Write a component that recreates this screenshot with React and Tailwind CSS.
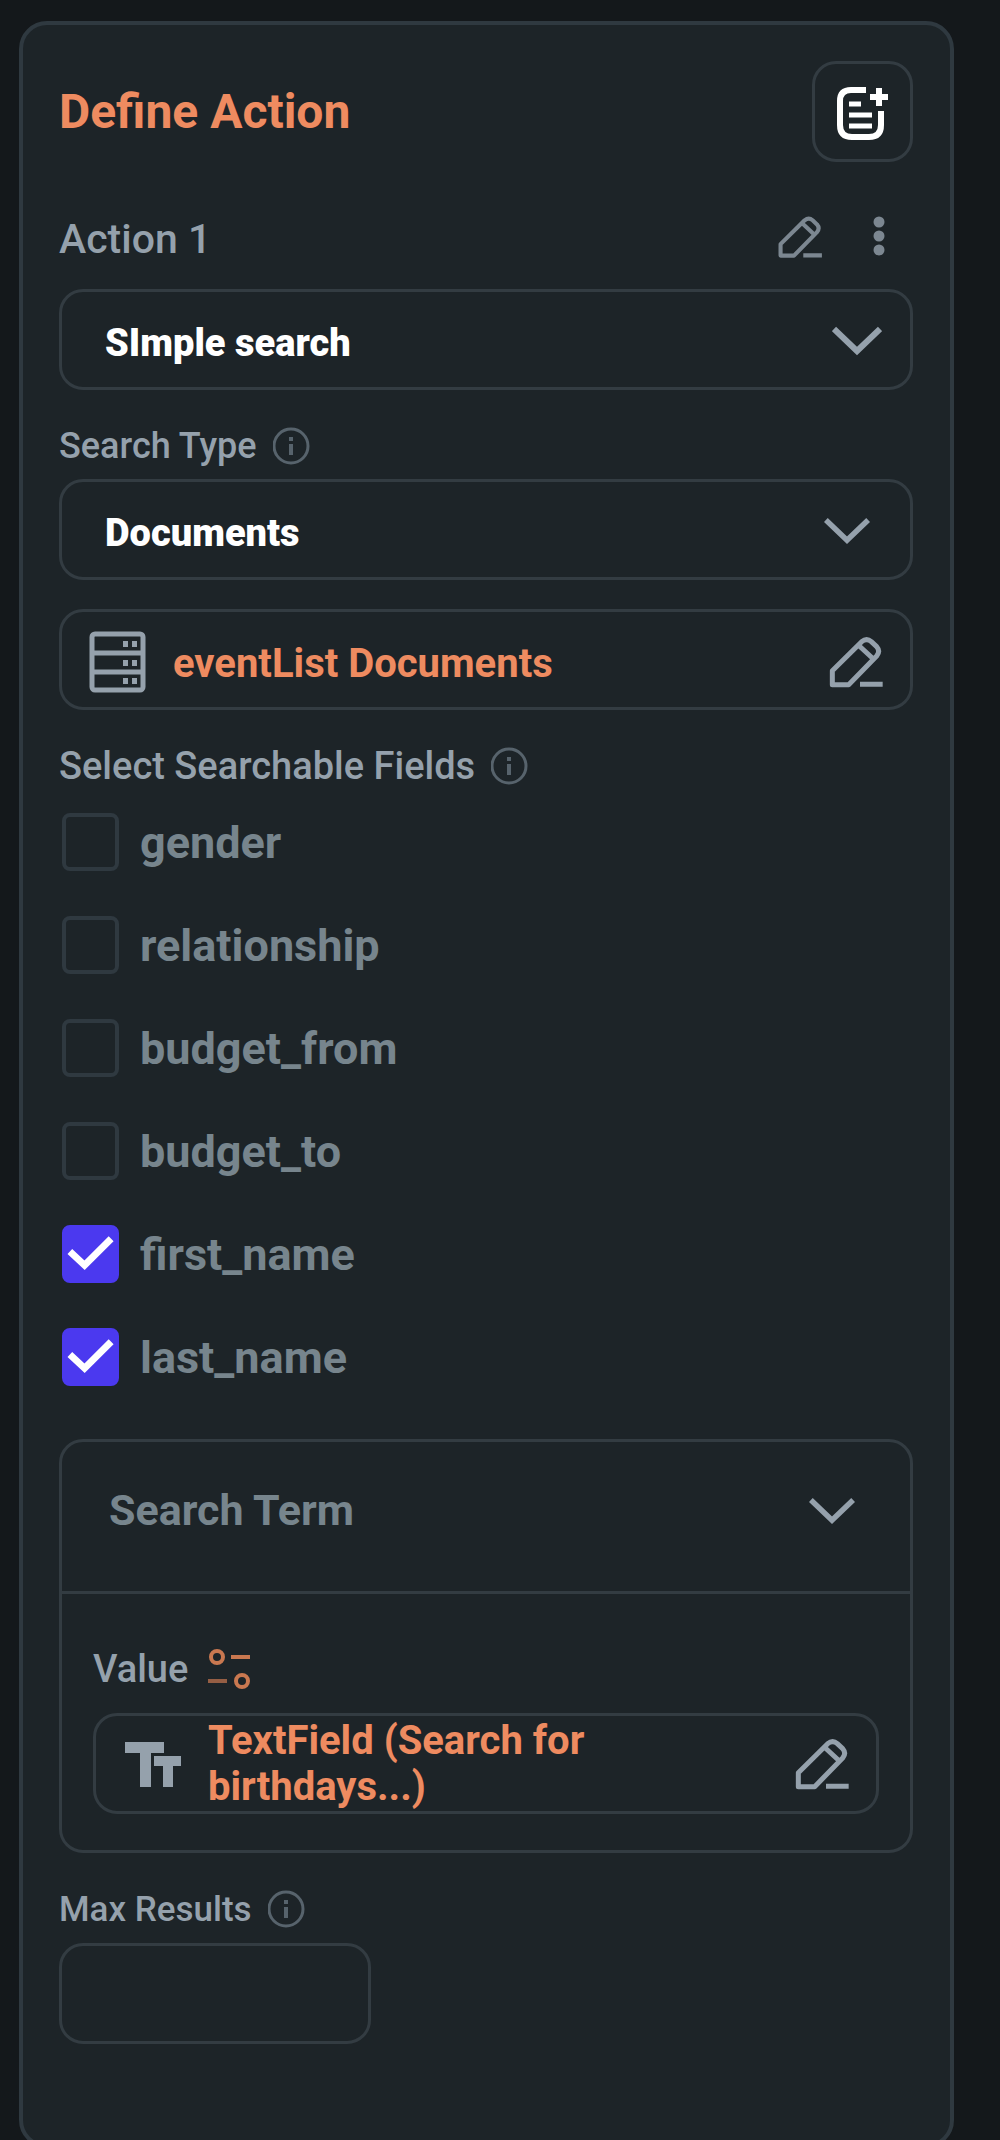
import { useState } from 'react'

const FIELDS = ['gender', 'relationship', 'budget_from', 'budget_to', 'first_name', 'last_name']

function PencilIcon({ className }) {
  return (
    <svg viewBox="0 0 168 160" fill="none" stroke="currentColor" strokeWidth="15" strokeLinejoin="round" className={className} aria-hidden="true">
      <path d="M13 148V106L101 19q15-12 29 0l16 15q12 14 0 28L62 148Z" />
      <path d="M94 32l39 36M96 147h68" />
    </svg>
  )
}

function ChevronIcon({ className }) {
  return (
    <svg viewBox="0 0 50 30" fill="none" stroke="currentColor" strokeWidth="6" className={className} aria-hidden="true">
      <path d="M2 3l23 22L48 3" />
    </svg>
  )
}

function InfoIcon() {
  return (
    <svg viewBox="0 0 38 38" fill="none" stroke="currentColor" className="w-[38px] h-[38px] shrink-0 text-[#57636c]" aria-hidden="true">
      <circle cx="18" cy="19" r="17" strokeWidth="3" />
      <path d="M18 17v11M18 10v4" strokeWidth="4" />
    </svg>
  )
}

function NoteAddIcon() {
  return (
    <svg viewBox="0 0 56 56" fill="none" stroke="currentColor" className="w-14 h-14" aria-hidden="true">
      <path d="M31 6H16Q5 6 5 17v24q0 12 12 12h17q12 0 12-12V27" strokeWidth="6" />
      <path d="M14 20h12M14 31h23M14 42h23" strokeWidth="5" />
      <path d="M44 4v18M35 13h18" strokeWidth="6" />
    </svg>
  )
}

function DatabaseIcon() {
  return (
    <svg viewBox="0 0 57 62" fill="none" stroke="currentColor" className="w-[57px] h-[62px] shrink-0" aria-hidden="true">
      <rect x="3" y="3" width="51" height="56" rx="3" strokeWidth="5" />
      <path d="M3 22h51M3 41h51" strokeWidth="5" />
      <path d="M34 13h5M43 13h5M34 32h5M43 32h5M34 50h5M43 50h5" strokeWidth="6" />
    </svg>
  )
}

function TextIcon() {
  return (
    <svg viewBox="0 0 59 46" fill="currentColor" className="w-[59px] h-[46px] shrink-0" aria-hidden="true">
      <path d="M2 1h39v11H28v34H17V12H2z" />
      <path d="M31 15h27v10h-8v21H40V25h-9z" />
    </svg>
  )
}

function VariableIcon() {
  return (
    <svg viewBox="0 0 42 42" fill="none" stroke="currentColor" strokeWidth="4" className="w-[42px] h-[42px]" aria-hidden="true">
      <circle cx="9" cy="9" r="6" />
      <path d="M23 9h19" />
      <path d="M0 33h19" opacity=".7" />
      <circle cx="34" cy="33" r="6" />
    </svg>
  )
}

function FieldLabel({ htmlFor, className, children }) {
  return (
    <div className="flex items-center gap-4 h-10 mt-9">
      <label htmlFor={htmlFor} className={className}>{children}</label>
      <InfoIcon />
    </div>
  )
}

function SelectBox({ id, label, value, chevron }) {
  return (
    <div className="relative">
      <select id={id} aria-label={label} defaultValue={value}
        className="block w-full h-[101px] pl-[43px] pr-24 pt-2 appearance-none bg-transparent border-3 border-[#333c42] rounded-3xl font-[Roboto,sans-serif] font-black text-[38px] text-white outline-none">
        <option>{value}</option>
      </select>
      <ChevronIcon className={chevron} />
    </div>
  )
}

export default function App() {
  const [checked, setChecked] = useState(['first_name', 'last_name'])
  const [open, setOpen] = useState(true)

  const toggle = (name) => {
    setChecked(checked.includes(name) ? checked.filter(n => n !== name) : [...checked, name])
  }

  return (
    <div className="min-h-screen bg-[#14181b] pt-[21px] pl-[19px] pr-[46px] font-[Roboto,sans-serif] text-[#95a1ac]">
      <main className="bg-[#1d2428] border-4 border-[#2f3940] rounded-[28px] pl-9 pr-[37px] pt-9 pb-[100px]">
        <header className="flex items-center justify-between">
          <h1 className="font-bold text-[48px] leading-none text-[#ee8b60]">Define Action</h1>
          <button type="button" aria-label="Add note" className="flex items-center justify-center w-[101px] h-[101px] border-3 border-[#333c42] rounded-3xl text-white">
            <NoteAddIcon />
          </button>
        </header>

        <div className="flex items-center mt-[50px] mb-[27px] h-[50px] pr-[22px]">
          <h2 className="grow pt-1 font-medium text-[41px] leading-[46px]">Action 1</h2>
          <button type="button" aria-label="Rename action" className="mr-11 text-[#7c8791]">
            <PencilIcon className="w-[46px] h-11" />
          </button>
          <button type="button" aria-label="More options" className="text-[#7c8791]">
            <svg viewBox="0 0 24 44" fill="currentColor" className="w-6 h-11" aria-hidden="true">
              <circle cx="12" cy="7" r="5.5" />
              <circle cx="12" cy="21" r="5.5" />
              <circle cx="12" cy="35" r="5.5" />
            </svg>
          </button>
        </div>

        <SelectBox id="action" label="Action" value="SImple search"
          chevron="absolute right-[31px] top-[37px] w-[50px] h-[30px] pointer-events-none" />

        <FieldLabel htmlFor="search-type" className="font-medium text-[36px] leading-none">Search Type</FieldLabel>
        <div className="mt-[13px]">
          <SelectBox id="search-type" value="Documents"
            chevron="absolute right-[43px] top-[38px] w-[46px] h-[28px] pointer-events-none" />
        </div>

        <div className="flex items-center mt-[29px] h-[101px] pl-[27px] pr-[26px] pt-1 border-3 border-[#333c42] rounded-3xl">
          <DatabaseIcon />
          <span className="grow ml-[27px] pt-1 font-bold text-[40px] leading-[46px] text-[#ee8b60]">eventList Documents</span>
          <button type="button" aria-label="Edit documents source">
            <PencilIcon className="w-14 h-[54px]" />
          </button>
        </div>

        <fieldset className="mt-9">
          <legend className="flex items-center gap-4 h-10 font-medium text-[38px] leading-none">
            Select Searchable Fields
            <InfoIcon />
          </legend>
          <div className="flex flex-col gap-[45px] mt-[27px] pl-[3px]">
            {FIELDS.map(name => (
              <label key={name} className="flex items-center gap-[21px] h-[58px]">
                <span className="relative">
                  <input type="checkbox" checked={checked.includes(name)} onChange={() => toggle(name)}
                    className="peer block w-[57px] h-[58px] appearance-none border-4 border-[#2f3940] rounded-lg checked:bg-[#4b39ef] checked:border-[#4b39ef]" />
                  <svg viewBox="0 0 58 58" fill="none" stroke="white" strokeWidth="7" className="absolute inset-0 hidden peer-checked:block pointer-events-none" aria-hidden="true">
                    <path d="M8 27l15 14 27-27" />
                  </svg>
                </span>
                <span className="font-bold text-[45px] leading-none text-[#77858d]">{name}</span>
              </label>
            ))}
          </div>
        </fieldset>

        <section className="mt-[53px] border-3 border-[#333c42] rounded-3xl">
          <button type="button" aria-expanded={open} onClick={() => setOpen(!open)}
            className="flex items-center justify-between w-full h-[149px] pl-[47px] pr-[55px] pb-3 text-left">
            <span className="font-bold text-[43px] leading-none text-[#77858d]">Search Term</span>
            <ChevronIcon className="w-[46px] h-[28px]" />
          </button>
          {open && (
            <div className="border-t-3 border-[#333c42] px-[31px] pt-[53px] pb-9">
              <div className="flex items-center gap-5 h-11 mb-[22px]">
                <span className="font-medium text-[38px] leading-none">Value</span>
                <button type="button" aria-label="Set from variable" className="text-[#c97850]">
                  <VariableIcon />
                </button>
              </div>
              <div className="flex items-center h-[101px] pl-[27px] pr-[26px] border-3 border-[#333c42] rounded-3xl">
                <TextIcon />
                <span className="grow mx-[26px] font-bold text-[40px] leading-[46px] text-[#ee8b60]">TextField (Search for birthdays...)</span>
                <button type="button" aria-label="Edit value">
                  <PencilIcon className="w-14 h-[54px]" />
                </button>
              </div>
            </div>
          )}
        </section>

        <FieldLabel htmlFor="max-results" className="font-medium text-[35px] leading-none">Max Results</FieldLabel>
        <input id="max-results" type="text"
          className="block w-[312px] h-[101px] mt-[14px] px-8 bg-transparent border-3 border-[#333c42] rounded-3xl text-[38px] text-white outline-none" />
      </main>
    </div>
  )
}
